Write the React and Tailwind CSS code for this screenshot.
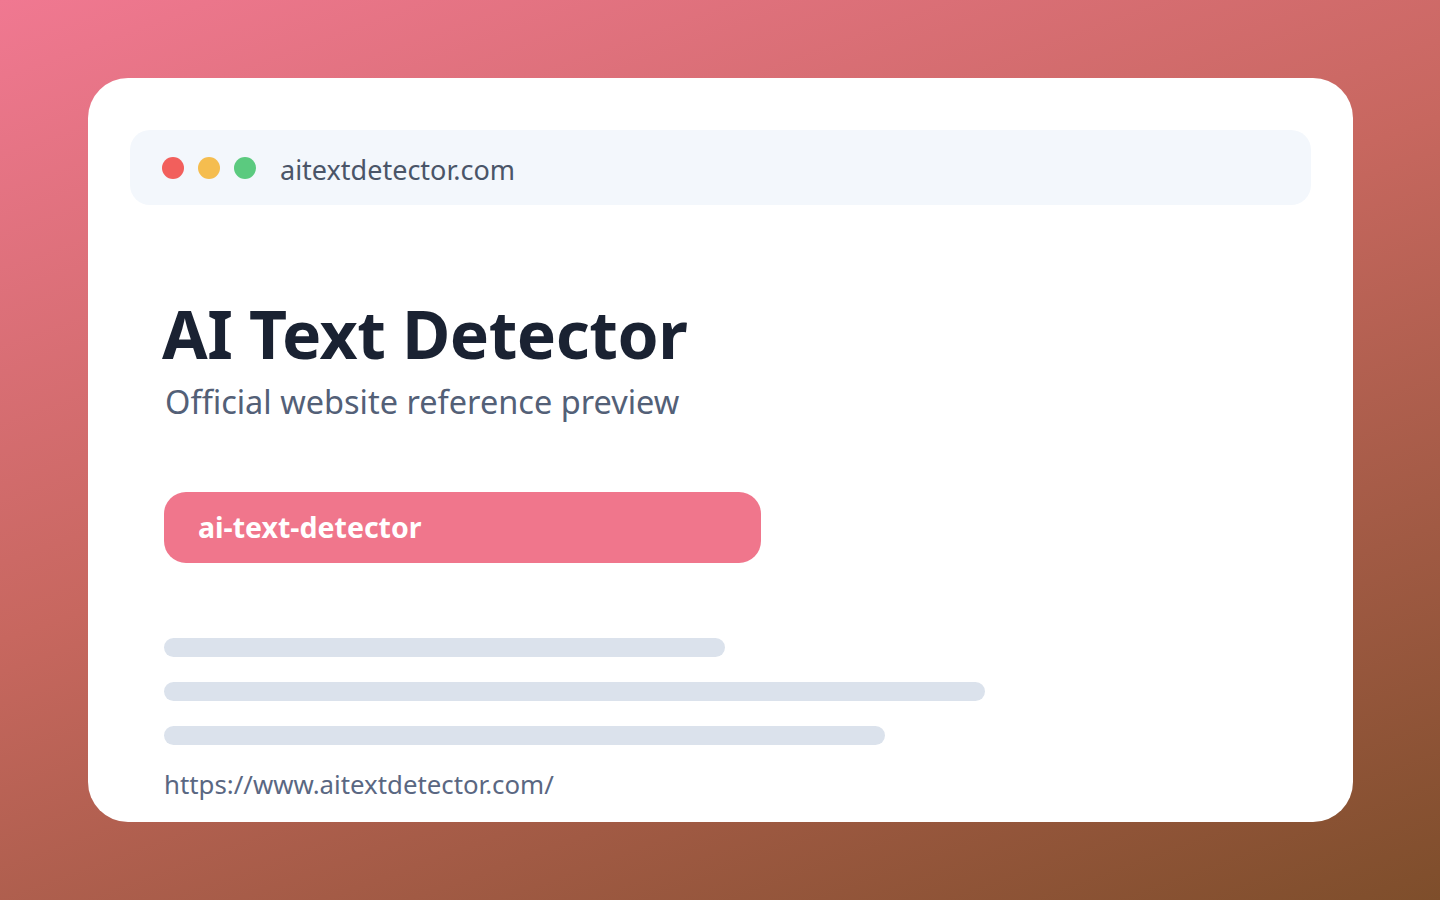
import React from "react";

const font = { fontFamily: '"Noto Sans", "Open Sans", sans-serif' };

const bars = ["w-[561px]", "w-[821px]", "w-[721px]"];

export default function App() {
  return (
    <div
      className="w-full h-[900px] bg-[linear-gradient(160deg,#f07891_0%,#c7675f_45%,#7e4e2b_100%)] pt-[78px] pl-[88px]"
      style={font}
    >
      {/* card */}
      <div className="w-[1265px] h-[744px] bg-white rounded-[40px] px-[42px] pt-[52px]">
        {/* address bar */}
        <div className="h-[75px] bg-[#f3f7fc] rounded-[20px] flex items-center pl-[32px]">
          <div className="flex items-center gap-[14px]">
            <span className="w-[22px] h-[22px] rounded-full bg-[#f25f5c]" />
            <span className="w-[22px] h-[22px] rounded-full bg-[#f5bd4f]" />
            <span className="w-[22px] h-[22px] rounded-full bg-[#5bca7f]" />
          </div>
          <span className="ml-[24px] text-[27px] leading-none text-[#4a5568] mt-[4px]">
            aitextdetector.com
          </span>
        </div>

        <div className="pl-[34px]">
          <h1 className="mt-[90px] -ml-[2px] text-[66px] leading-[76px] font-bold text-[#1a2232] tracking-[-0.5px]">
            AI Text Detector
          </h1>
          <p className="mt-[11px] text-[32.5px] leading-[40px] text-[#536077] pl-[1px]">
            Official website reference preview
          </p>

          <div className="mt-[70px] w-[597px] h-[71px] rounded-[22px] bg-[#f0768c] flex items-center pl-[34px]">
            <span className="text-[28.5px] leading-none font-bold text-white">
              ai-text-detector
            </span>
          </div>

          <div className="mt-[75px] flex flex-col gap-[25px]">
            {bars.map((w, i) => (
              <div key={i} className={`${w} h-[19px] rounded-full bg-[#dbe2ec]`} />
            ))}
          </div>

          <p className="mt-[22px] text-[25.8px] leading-[34px] text-[#5a6782]">
            https://www.aitextdetector.com/
          </p>
        </div>
      </div>
    </div>
  );
}
